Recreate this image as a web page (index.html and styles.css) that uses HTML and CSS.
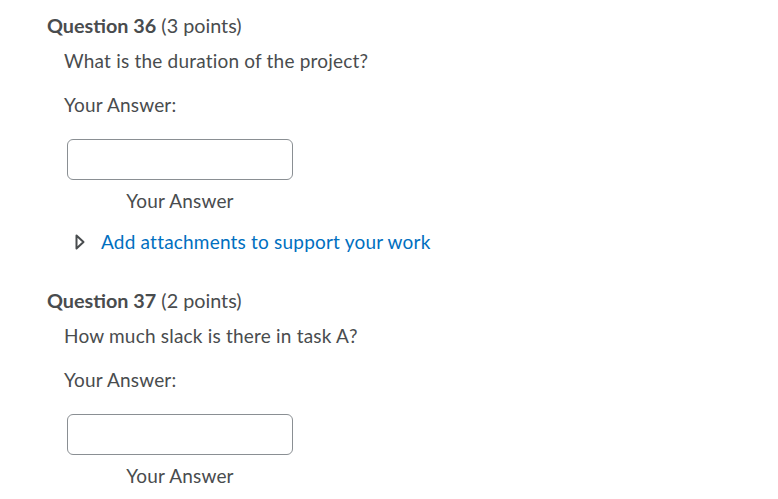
FILE: index.html
```html
<!DOCTYPE html>
<html>
<head>
<meta charset="utf-8">
<link rel="stylesheet" href="styles.css">
</head>
<body>
<div class="page">
  <section class="question">
    <h2 class="q-title"><strong>Question 36</strong> (3 points)</h2>
    <div class="q-body">
      <p class="q-text">What is the duration of the project?</p>
      <p class="q-label">Your Answer:</p>
      <div class="answer">
        <div class="input"></div>
        <div class="caption">Your Answer</div>
      </div>
      <div class="attach">
        <svg class="tri" width="10" height="16" viewBox="0 0 10 16"><path d="M1.5 1.5 L8.5 8 L1.5 14.5 Z" fill="none" stroke="#494c4e" stroke-width="2" stroke-linejoin="round"/></svg>
        <a class="link">Add attachments to support your work</a>
      </div>
    </div>
  </section>
  <section class="question second">
    <h2 class="q-title"><strong>Question 37</strong> (2 points)</h2>
    <div class="q-body">
      <p class="q-text">How much slack is there in task A?</p>
      <p class="q-label">Your Answer:</p>
      <div class="answer">
        <div class="input"></div>
        <div class="caption">Your Answer</div>
      </div>
    </div>
  </section>
</div>
</body>
</html>
```
FILE: styles.css
```css
html, body { margin: 0; padding: 0; background: #fff; }
body { font-family: Lato, "Open Sans", sans-serif; color: #494c4e; }
.page { padding: 12px 0 0 47px; }
.question { display: flex; flex-direction: column; }
.second { margin-top: 32px; }
.q-title { margin: 0; font-size: 19.8px; line-height: 26px; font-weight: 400; }
.q-title strong { font-weight: 700; }
.q-body { padding-left: 17px; display: flex; flex-direction: column; }
.q-text, .q-label, .caption, .link { font-size: 19px; letter-spacing: 0.2px; line-height: 26px; }
.q-text { margin: 10px 0 0; }
.q-label { margin: 18px 0 0; }
.answer { margin-top: 21px; margin-left: 3px; width: 226px; display: flex; flex-direction: column; align-items: center; }
.input { width: 224px; height: 39px; border: 1px solid #8a8f93; border-radius: 6px; box-sizing: content-box; align-self: stretch; }
.caption { margin-top: 8px; }
.attach { display: flex; align-items: center; margin-top: 15px; margin-left: 11px; }
.tri { display: block; margin-right: 16px; }
.link { color: #006fbf; }
```
